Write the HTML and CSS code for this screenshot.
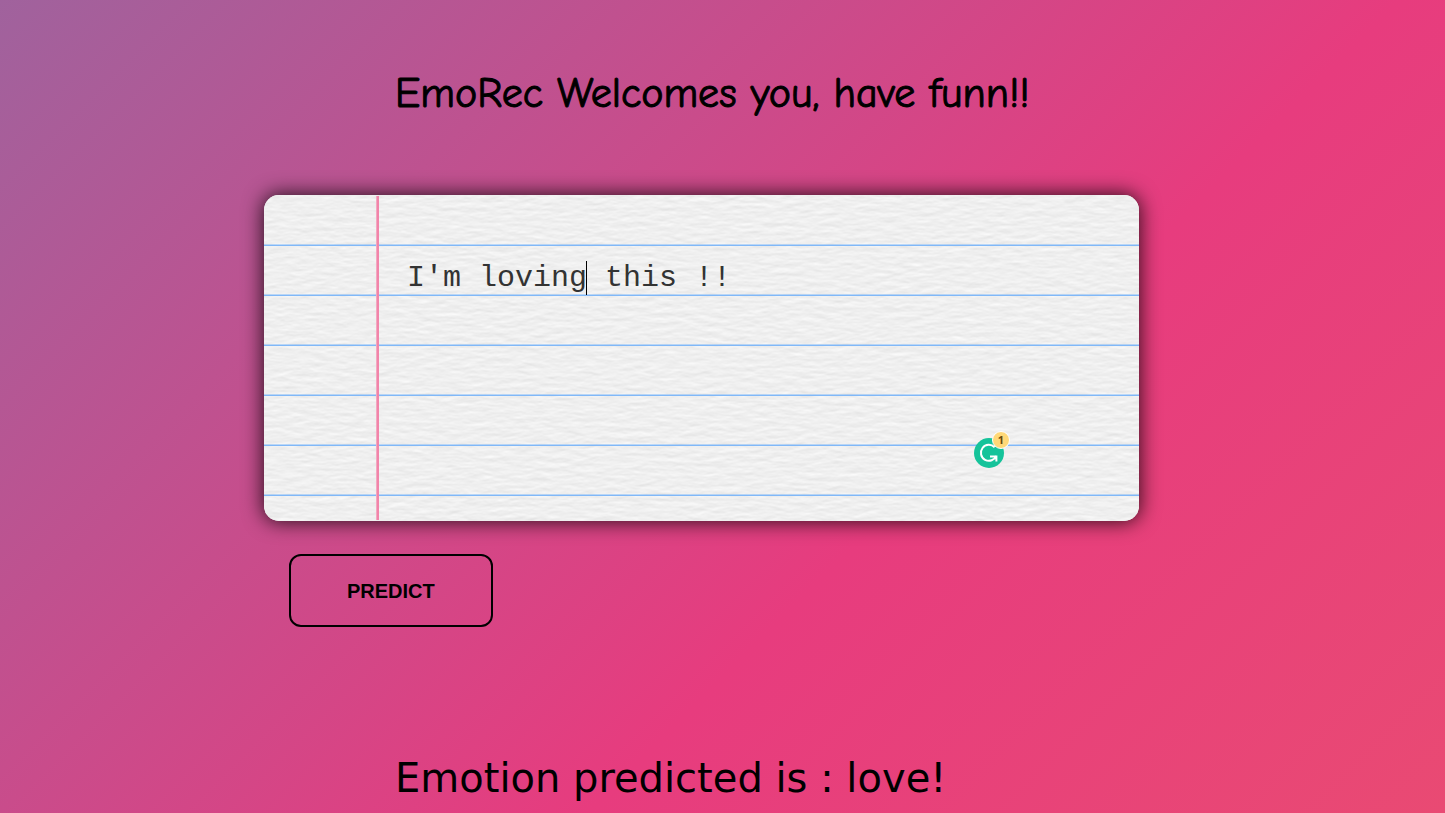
FILE: index.html
```html
<!DOCTYPE html>
<html lang="en">
<head>
<meta charset="utf-8">
<meta name="viewport" content="width=device-width, initial-scale=1">
<title>EmoRec</title>
<link rel="stylesheet" href="styles.css">
</head>
<body>
<main class="page">
  <h1 class="welcome">EmoRec Welcomes you, have funn!!</h1>
  <form class="form">
    <div class="paper">
      <svg class="grain" aria-hidden="true">
        <filter id="fibres" x="0" y="0" width="100%" height="100%" color-interpolation-filters="sRGB">
          <feTurbulence type="fractalNoise" baseFrequency="0.06 0.2" numOctaves="4" seed="7" result="noise"/>
          <feDiffuseLighting in="noise" surfaceScale="0.1" diffuseConstant="1.41" lighting-color="#f0f0f0">
            <feDistantLight azimuth="270" elevation="45"/>
          </feDiffuseLighting>
        </filter>
        <rect width="100%" height="100%" filter="url(#fibres)"/>
      </svg>
      <div class="rules"></div>
      <div class="margin-line"></div>
      <div class="editor">
        <textarea class="note" aria-label="Your text" spellcheck="false">I'm loving this !!</textarea>
        <span class="caret"></span>
        <div class="checker">
          <svg class="checker-logo" viewBox="0 0 30 30" aria-hidden="true">
            <circle cx="15" cy="15" r="15" fill="#15c39a"/>
            <path d="M20.6 9.2A8 8 0 1 0 22.4 17.6M16 18.6H22.4V23.4" fill="none" stroke="#fff" stroke-width="2"/>
          </svg>
          <span class="count">1</span>
        </div>
      </div>
    </div>
    <button class="predict" type="button">PREDICT</button>
  </form>
  <p class="result">Emotion predicted is : love!</p>
</main>
</body>
</html>
```
FILE: styles.css
```css
* { box-sizing: border-box; }

body {
  margin: 0;
  min-height: 100vh;
  background: linear-gradient(135deg, #a0629d 0%, #e73c7e 62%, #e94a73 100%);
  color: #000;
}

.page {
  padding: 64px 306px 0 264px;
}

.welcome {
  margin: 0 0 71px 131px;
  font: 400 42px/60px "Comic Sans MS", "Comic Neue", Lato, sans-serif;
  -webkit-text-stroke: 1px #000;
  white-space: nowrap;
}

.paper {
  position: relative;
  padding: 58px 128px 50px 143px;
  border-radius: 15px;
  background: #f0f0f0;
  box-shadow: 0 0 20px 1px rgba(0, 0, 0, 0.8);
  overflow: hidden;
}

.grain,
.rules {
  position: absolute;
  inset: 0;
  width: 100%;
  height: 100%;
}

.rules {
  top: 1px;
  background-image: linear-gradient(to bottom, rgba(128, 184, 248, 0) 48px, rgba(128, 184, 248, 1) 49px);
  background-size: 100% 50px;
}

.margin-line {
  position: absolute;
  top: 1px;
  bottom: 1px;
  left: 112px;
  width: 3px;
  background: linear-gradient(to right, #f2a9c1 1px, #f284aa 1px);
}

.editor {
  position: relative;
}

.note {
  display: block;
  width: 100%;
  height: 218px;
  padding: 0;
  border: 0;
  outline: 0;
  resize: none;
  overflow: hidden;
  background: transparent;
  color: #333;
  font: 400 30px/50px "Courier New", "Liberation Mono", monospace;
}

.caret {
  position: absolute;
  top: 8px;
  left: 179px;
  width: 1px;
  height: 34px;
  background: #000;
}

.checker {
  position: absolute;
  right: 0;
  bottom: 1px;
  width: 37px;
  height: 37px;
}

.checker-logo {
  position: absolute;
  left: 0;
  bottom: 2px;
  width: 30px;
  height: 30px;
}

.count {
  position: absolute;
  top: -2px;
  left: 18px;
  width: 18px;
  height: 18px;
  border: 1px solid #fff;
  border-radius: 50%;
  background: #ffd877;
  color: #6b4a0a;
  font: 700 11px/16px "Open Sans", sans-serif;
  text-align: center;
}

.predict {
  display: block;
  margin: 33px 0 0 25px;
  padding: 24px 56px 22px;
  border: 2px solid #000;
  border-radius: 12px;
  background: transparent;
  color: #000;
  font: 700 20px/23px "Liberation Sans", Arial, sans-serif;
}

.result {
  margin: 126px 0 0 131px;
  font: 400 40px/50px Verdana, "DejaVu Sans", sans-serif;
  white-space: nowrap;
}
```
